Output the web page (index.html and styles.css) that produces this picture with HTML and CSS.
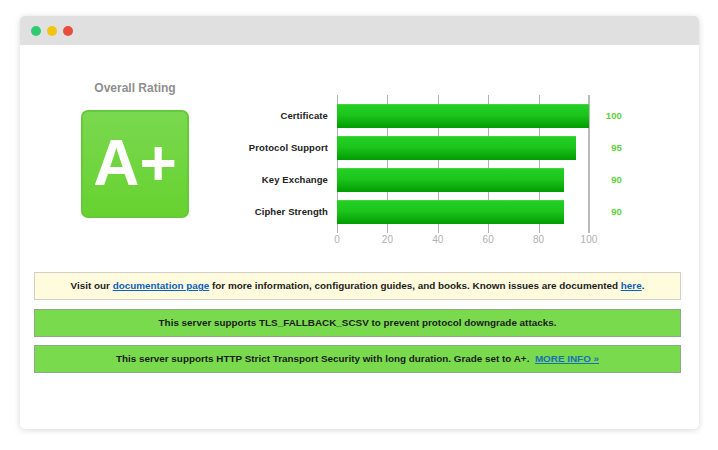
FILE: index.html
```html
<!DOCTYPE html>
<html lang="en">
<head>
  <meta charset="UTF-8" />
  <meta name="viewport" content="width=device-width, initial-scale=1.0"/>
  <title>SSL Report</title>
  <link rel="stylesheet" href="styles.css">
</head>
<body>

  <div class="window">
    <!-- Barra de ventana -->
    <div class="titlebar">
      <span class="dot dot-green"></span>
      <span class="dot dot-yellow"></span>
      <span class="dot dot-red"></span>
    </div>

    <div class="content">
      <div class="summary">
        <!-- Nota -->
        <div class="rating">
          <h2>Overall Rating</h2>
          <div class="grade">A+</div>
        </div>

        <!-- Grafico -->
        <div class="chart">
          <div class="labels">
            <div>Certificate</div>
            <div>Protocol Support</div>
            <div>Key Exchange</div>
            <div>Cipher Strength</div>
          </div>
          <div class="plot-area">
            <div class="plot">
              <div class="bar" style="width: 100%"></div>
              <div class="bar" style="width: 95%"></div>
              <div class="bar" style="width: 90%"></div>
              <div class="bar" style="width: 90%"></div>
            </div>
            <div class="ticks">
              <span>0</span><span>20</span><span>40</span><span>60</span><span>80</span><span>100</span>
            </div>
          </div>
          <div class="values">
            <div>100</div>
            <div>95</div>
            <div>90</div>
            <div>90</div>
          </div>
        </div>
      </div>

      <!-- Avisos -->
      <div class="notice notice-info">Visit our <a href="#">documentation page</a> for more information, configuration guides, and books. Known issues are documented <a href="#">here</a>.</div>
      <div class="notice notice-good">This server supports TLS_FALLBACK_SCSV to prevent protocol downgrade attacks.</div>
      <div class="notice notice-good">This server supports HTTP Strict Transport Security with long duration. Grade set to A+. &nbsp;<a href="#" class="more">MORE INFO »</a></div>
    </div>
  </div>

</body>
</html>
```

FILE: styles.css
```css
/* Reset y base */
* { box-sizing: border-box; margin: 0; padding: 0; }
body {
  font-family: "Liberation Sans", Arial, sans-serif;
  background: #fff;
  height: 450px;
  padding: 16px 19px 0 20px;
}

/* Ventana */
.window {
  height: 413px;
  background: #fff;
  border-radius: 5px;
  box-shadow: 0 1px 6px rgba(0,0,0,0.16);
  overflow: hidden;
}
.titlebar {
  display: flex;
  align-items: center;
  gap: 6px;
  height: 29px;
  padding-left: 11px;
  background: #e0e0e0;
}
.dot {
  width: 10px;
  height: 10px;
  border-radius: 50%;
}
.dot-green { background: #2ecc71; }
.dot-yellow { background: #f1c40f; }
.dot-red { background: #e74c3c; }

.content {
  padding: 35px 18px 0 14px;
}
.summary {
  display: flex;
  height: 192px;
}

/* Nota */
.rating {
  width: 164px;
  padding-left: 47px;
}
.rating h2 {
  width: 108px;
  font-size: 12px;
  line-height: 16px;
  color: #8f8f8f;
  text-align: center;
  margin-bottom: 14px;
}
.grade {
  width: 108px;
  height: 108px;
  border: 2px solid #66c83a;
  border-radius: 7px;
  background: linear-gradient(#7ad84f, #66d22f);
  color: #fff;
  font-size: 64px;
  font-weight: bold;
  line-height: 102px;
  text-align: center;
}

/* Grafico */
.chart {
  display: flex;
  padding-top: 15px;
  font-size: 9.5px;
  font-weight: bold;
  letter-spacing: 0.1px;
}
.labels {
  width: 139px;
  padding: 9px 9px 0 0;
  text-align: right;
  color: #222;
}
.labels div,
.values div {
  height: 32px;
  line-height: 24px;
}
.plot-area {
  width: 253px;
}
.plot {
  display: flex;
  flex-direction: column;
  gap: 8px;
  height: 138px;
  padding: 9px 1px 9px 0;
  background:
    linear-gradient(#bbb, #bbb) right / 2px 100% no-repeat,
    repeating-linear-gradient(90deg, #b0b0b0 0 1px, transparent 1px 50.4px);
}
.bar {
  height: 24px;
  background: linear-gradient(#24d024, #1cc41c 45%, #009c00);
  border-top: 1px solid #3fd63f;
}
.ticks {
  display: flex;
  justify-content: space-between;
  margin: 1px -9px 0 -10px;
  color: #b0b0b0;
  font-size: 10px;
  font-weight: normal;
  letter-spacing: 0;
  line-height: 12px;
}
.ticks span {
  width: 20px;
  text-align: center;
}
.values {
  width: 32px;
  padding-top: 9px;
  text-align: right;
  color: #5cd13a;
}

/* Avisos */
.notice {
  height: 28px;
  margin-bottom: 8px;
  border: 1px solid #d0d0c8;
  font-size: 9.9px;
  font-weight: bold;
  line-height: 26px;
  text-align: center;
  color: #1c1c1c;
}
.notice-info {
  margin-bottom: 9px;
  background: #fffbdc;
}
.notice-good {
  background: #78da4c;
  border-color: #8fa88a;
}
.notice a {
  color: #0a5fc0;
}
.notice a.more {
  color: #1a70b8;
}
```
